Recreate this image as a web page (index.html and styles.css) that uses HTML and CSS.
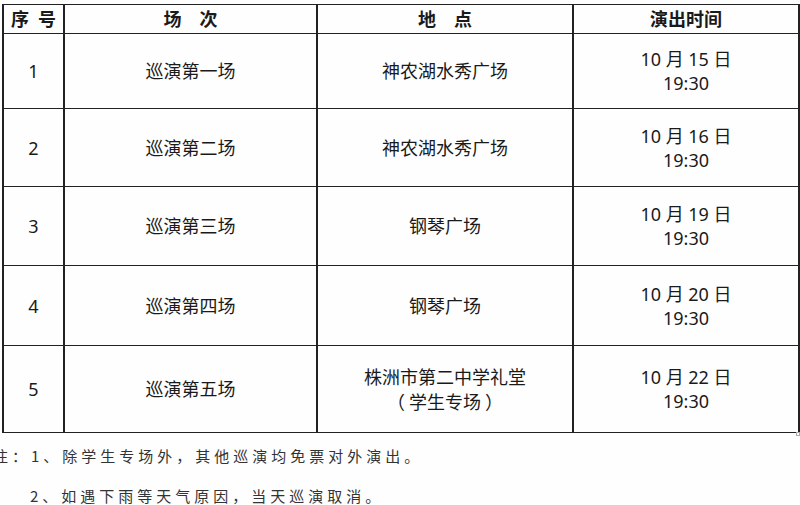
FILE: index.html
```html
<!DOCTYPE html>
<html lang="zh-CN">
<head>
<meta charset="utf-8">
<title>巡演安排</title>
<link rel="stylesheet" href="styles.css">
</head>
<body>
<div class="page">
  <table class="schedule">
    <colgroup>
      <col class="c-no">
      <col class="c-name">
      <col class="c-place">
      <col class="c-time">
    </colgroup>
    <thead>
      <tr class="r-head">
        <th>序&ensp;号</th>
        <th>场　次</th>
        <th>地　点</th>
        <th>演出时间</th>
      </tr>
    </thead>
    <tbody>
      <tr class="r1">
        <td>1</td>
        <td>巡演第一场</td>
        <td>神农湖水秀广场</td>
        <td>10 月 15 日<br>19:30</td>
      </tr>
      <tr class="r2">
        <td>2</td>
        <td>巡演第二场</td>
        <td>神农湖水秀广场</td>
        <td>10 月 16 日<br>19:30</td>
      </tr>
      <tr class="r3">
        <td>3</td>
        <td>巡演第三场</td>
        <td>钢琴广场</td>
        <td>10 月 19 日<br>19:30</td>
      </tr>
      <tr class="r4">
        <td>4</td>
        <td>巡演第四场</td>
        <td>钢琴广场</td>
        <td>10 月 20 日<br>19:30</td>
      </tr>
      <tr class="r5">
        <td>5</td>
        <td>巡演第五场</td>
        <td>株洲市第二中学礼堂<br><span class="cjk">（&nbsp;学生专场&nbsp;）</span></td>
        <td>10 月 22 日<br>19:30</td>
      </tr>
    </tbody>
  </table>
  <span class="handle"></span>
  <div class="notes">
    <p class="note first">注：1、除学生专场外，其他巡演均免票对外演出。</p>
    <p class="note second">2、如遇下雨等天气原因，当天巡演取消。</p>
  </div>
</div>
</body>
</html>
```
FILE: styles.css
```css
html, body {
  margin: 0;
  padding: 0;
  background: #fefefe;
  overflow: hidden;
}
.page {
  position: relative;
  width: 800px;
  height: 505px;
  padding-top: 4px;
  box-sizing: border-box;
}
.schedule {
  margin-left: 2px;
  width: 796px;
  border-collapse: collapse;
  table-layout: fixed;
  font-family: "Noto Sans", "Noto Sans CJK SC", sans-serif;
  font-size: 18px;
  line-height: 24px;
  color: #1a1a1a;
}
.cjk {
  font-family: "Noto Sans CJK SC", sans-serif;
}
.c-no { width: 61px; }
.c-name { width: 253px; }
.c-place { width: 256px; }
.c-time { width: 226px; }
.schedule th,
.schedule td {
  border-top: 1px solid #222;
  border-bottom: 1px solid #222;
  border-left: 2px solid #222;
  border-right: 2px solid #222;
  text-align: center;
  vertical-align: middle;
  padding: 0;
}
.schedule th {
  font-weight: 700;
  line-height: 22px;
}
.r-head { height: 29px; }
.r1 { height: 75px; }
.r2 { height: 78px; }
.r3 { height: 79px; }
.r4 { height: 80px; }
.r5 { height: 87px; }
.handle {
  position: absolute;
  left: 796px;
  top: 432px;
  width: 4px;
  height: 4px;
  border: 1px solid #aaa;
  box-sizing: border-box;
}
.notes {
  margin-top: 3px;
  font-family: "Noto Sans CJK SC", sans-serif;
  font-size: 15px;
  line-height: 40px;
  letter-spacing: 4px;
  color: #333;
  white-space: nowrap;
}
.note {
  margin: 0;
}
.first {
  margin-left: -7px;
}
.second {
  margin-left: 30px;
}
```
